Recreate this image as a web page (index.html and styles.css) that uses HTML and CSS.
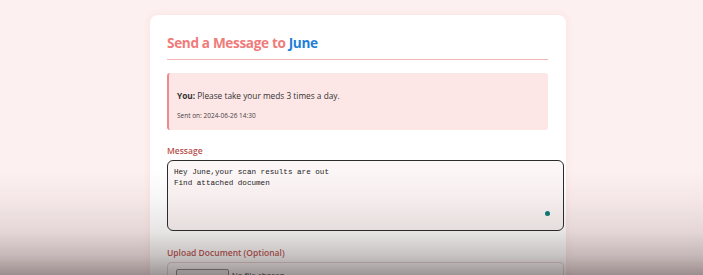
FILE: index.html
```html
<!DOCTYPE html>
<html>
<head>
<meta charset="utf-8">
<link rel="stylesheet" href="styles.css">
</head>
<body>
<div class="page">
  <div class="card">
    <h2 class="title">Send a Message to <span class="name">June</span></h2>
    <div class="msg">
      <p class="msg-text"><b>You:</b> Please take your meds 3 times a day.</p>
      <p class="msg-time">Sent on: 2024-06-26 14:30</p>
    </div>
    <label class="label">Message</label>
    <div class="ta-wrap">
      <textarea class="ta">Hey June,your scan results are out
Find attached documen</textarea>
      <span class="dot"></span>
    </div>
    <label class="label upload-label">Upload Document (Optional)</label>
    <div class="file-box">
      <span class="file-btn">Choose File</span><span class="file-none">No file chosen</span>
    </div>
  </div>
</div>
<div class="shade"></div>
</body>
</html>
```
FILE: styles.css
```css
html, body {
  margin: 0;
  padding: 0;
  background: #fdf0f0;
  font-family: "Open Sans", "Noto Sans", sans-serif;
  overflow: hidden;
  height: 275px;
}
.page {
  display: flex;
  justify-content: flex-start;
  padding: 15px 0 0 150px;
}
.card {
  width: 381px;
  padding: 17px 18px 20px 17px;
  background: #ffffff;
  border-radius: 8px;
  box-shadow: 0 0 8px rgba(240, 160, 160, 0.18);
}
.title {
  margin: 0;
  font-size: 13.6px;
  font-weight: 700;
  letter-spacing: -0.35px;
  color: #f07b7b;
  line-height: 20px;
  padding: 1px 0 6px;
  border-bottom: 1px solid #f3b5b5;
}
.name { color: #1f7fd6; }
.msg {
  margin-top: 13px;
  background: #fde6e6;
  border-left: 2px solid #ef8a8a;
  border-radius: 3px;
  padding: 17px 8px 8px 8px;
  height: 32px;
}
.msg-text {
  margin: 0;
  font-size: 8.3px;
  line-height: 12px;
  color: #333;
}
.msg-text b { font-weight: 700; }
.msg-time {
  margin: 9px 0 0;
  font-size: 6.5px;
  line-height: 9px;
  color: #444;
}
.label {
  display: block;
  margin-top: 15px;
  font-size: 8.5px;
  font-weight: 600;
  color: #b7514d;
  line-height: 12px;
}
.ta-wrap {
  position: relative;
  margin-top: 3px;
  width: 397px;
}
.ta {
  display: block;
  box-sizing: border-box;
  width: 397px;
  height: 71px;
  border: 1.5px solid #2b2b2b;
  border-radius: 6px;
  padding: 6px 6px;
  font-family: "Liberation Mono", "DejaVu Sans Mono", monospace;
  font-size: 7.6px;
  line-height: 11px;
  color: #222;
  background: #fdf6f6;
  resize: none;
}
.dot {
  position: absolute;
  right: 14px;
  bottom: 15px;
  width: 5px;
  height: 5px;
  border-radius: 50%;
  background: #0f7c7a;
}
.upload-label { margin-top: 16px; }
.file-box {
  margin-top: 3px;
  width: 397px;
  height: 28px;
  border: 1px solid #e5d5d5;
  border-radius: 4px;
  padding: 6px 8px;
  box-sizing: border-box;
  display: flex;
  align-items: flex-start;
  gap: 3px;
  font-size: 8px;
  color: #333;
}
.file-btn {
  border: 1px solid #888;
  background: #eee;
  padding: 1px 4px;
  border-radius: 2px;
}
.shade {
  position: fixed;
  inset: 0;
  pointer-events: none;
  background: linear-gradient(to bottom, rgba(0,0,0,0) 0%, rgba(0,0,0,0) 62%, rgba(60,40,40,0.04) 72%, rgba(60,40,40,0.12) 84%, rgba(55,38,38,0.28) 93%, rgba(50,35,35,0.48) 100%);
}
```
